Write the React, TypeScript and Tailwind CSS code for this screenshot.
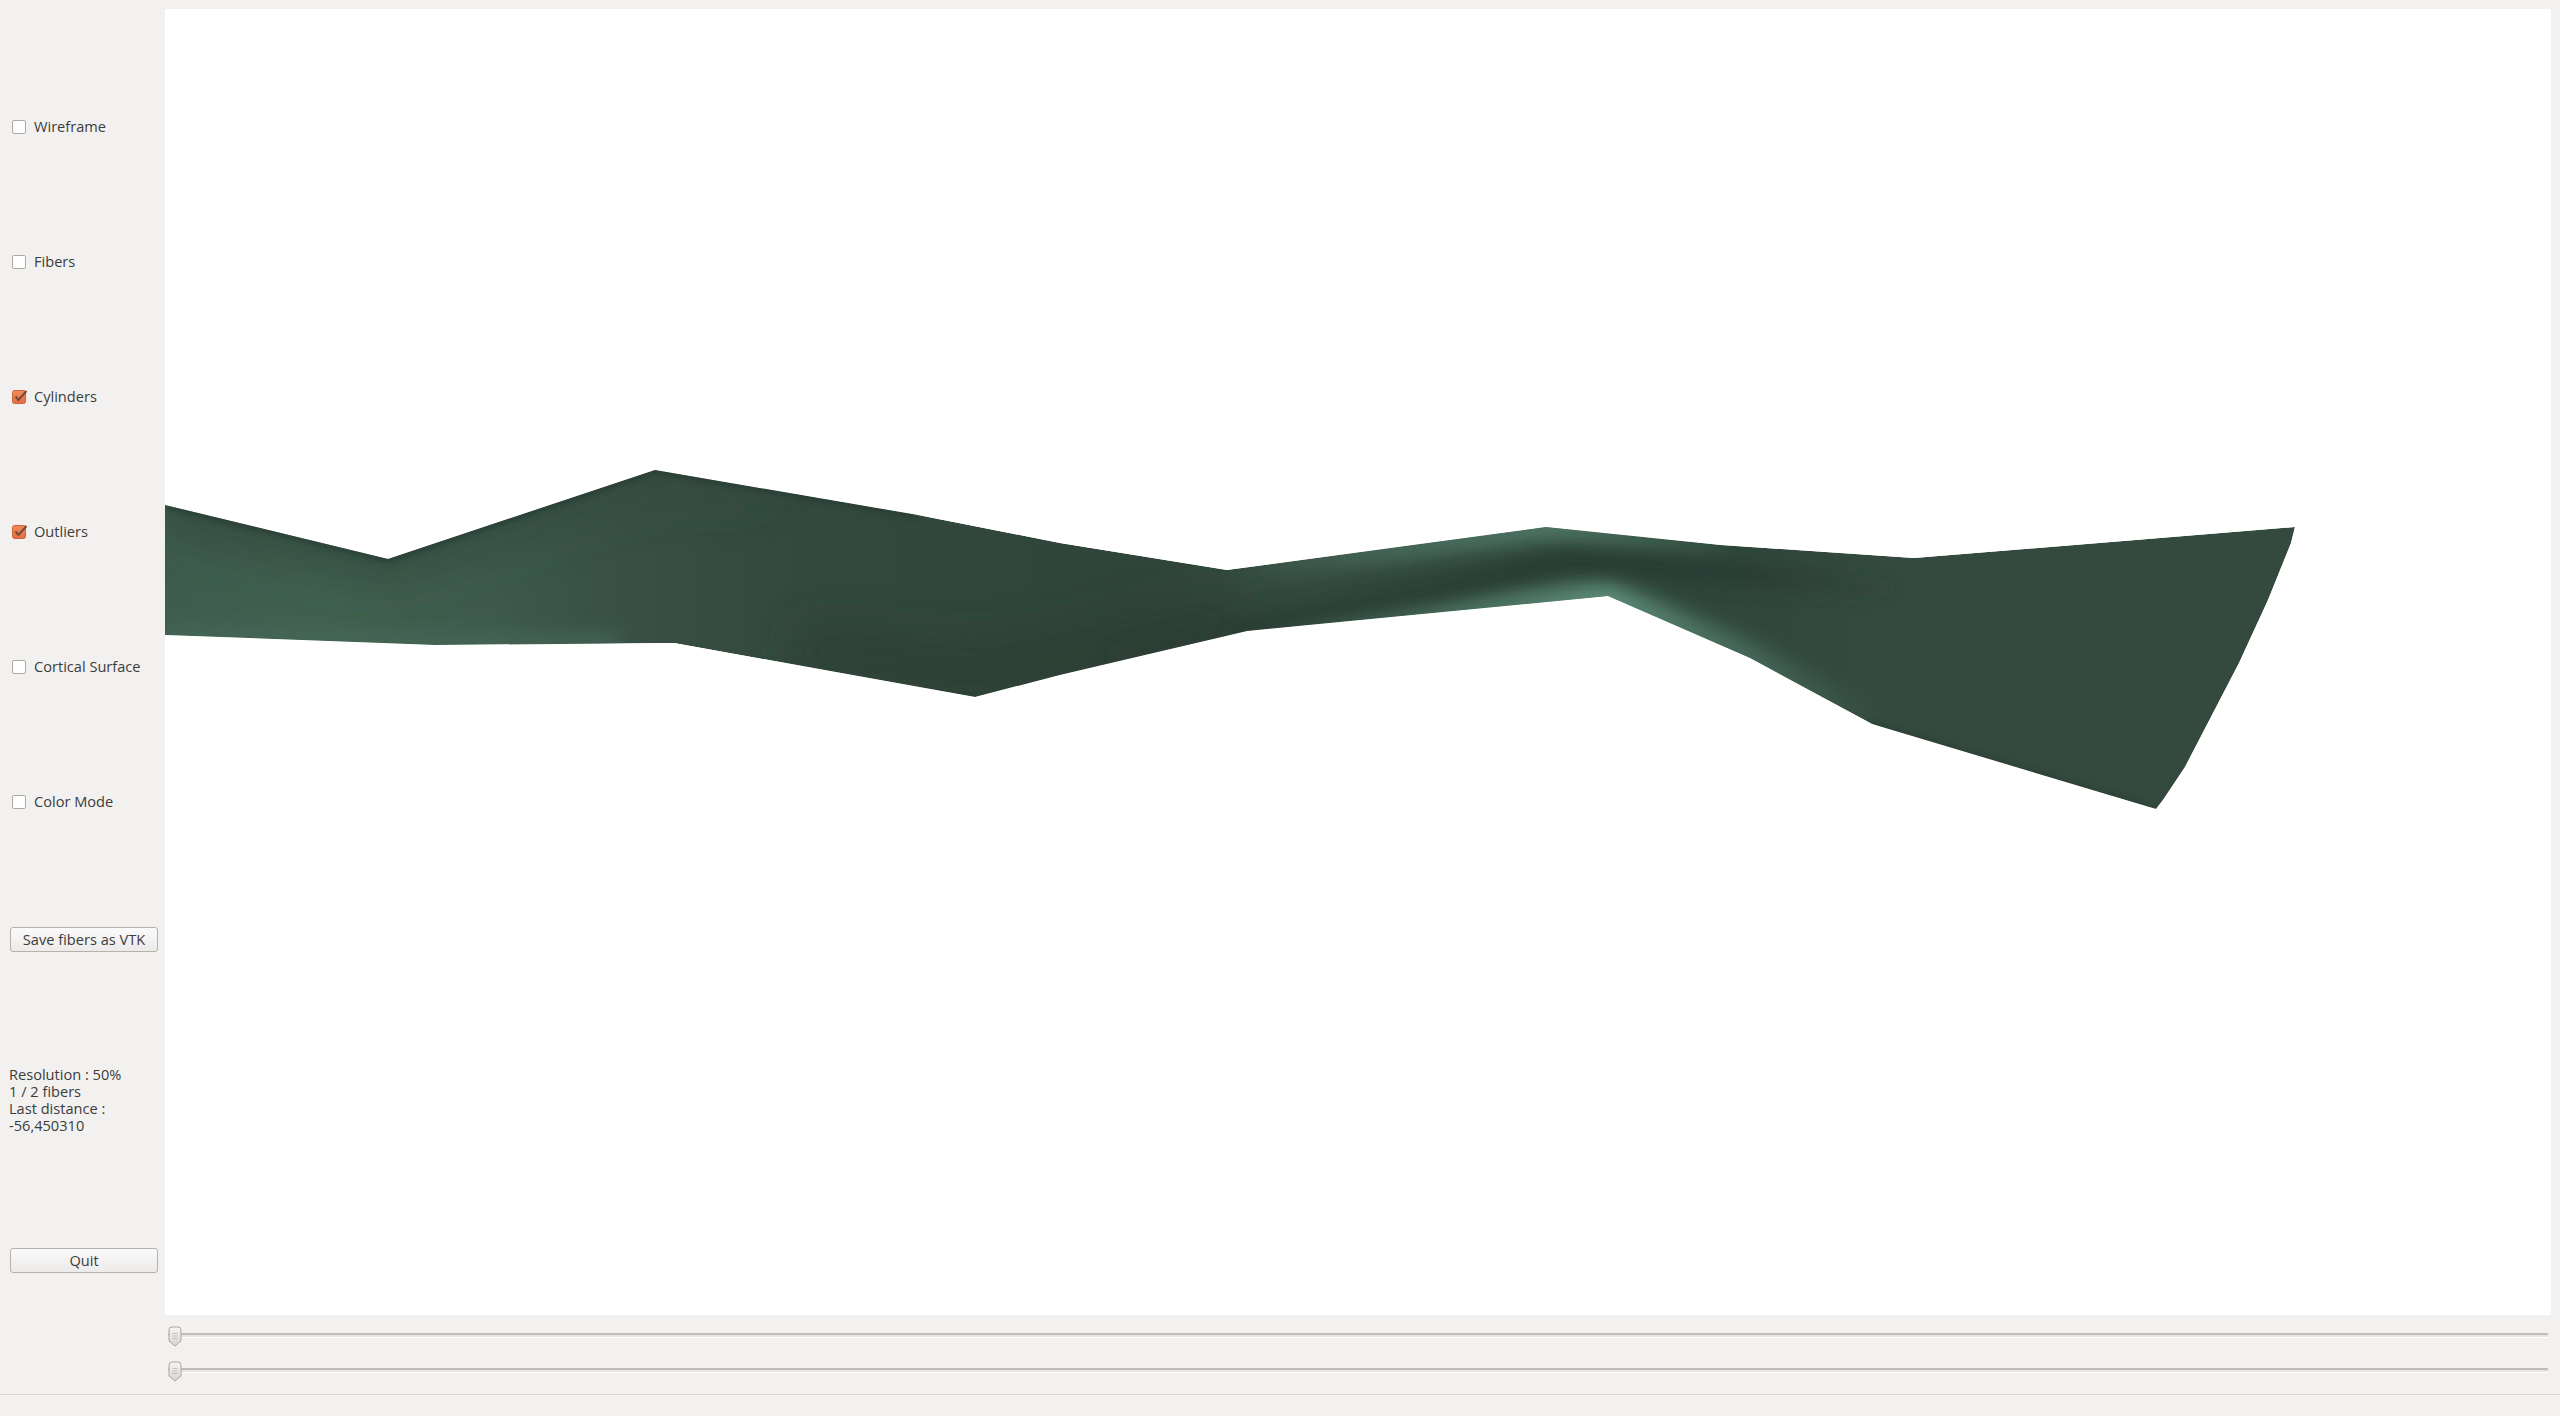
const TOP_EDGE = "165,505 388,559 655,470 918,515 1060,543 1227,570 1546,527 1721,545 1914,558 2295,527";
const RIGHT_EDGE = "2291,543 2268,600 2239,663 2185,767 2163,800 2156,809";
const BOTTOM_EDGE = "1872,724 1750,658 1608,596 1247,631 1060,675 975,697 674,643 435,645 165,635";
const OUTLINE = `${TOP_EDGE} ${RIGHT_EDGE} ${BOTTOM_EDGE}`;

function CheckRow({ label, checked }: { label: string; checked?: boolean }) {
  return (
    <div className="flex h-[135px] items-center pl-3">
      {checked ? (
        <svg width="17" height="16" viewBox="0 0 17 16" className="mr-[5px] shrink-0">
          <defs>
            <linearGradient id="checkFill" x1="0" y1="0" x2="0" y2="1">
              <stop offset="0" stopColor="#f28a58" />
              <stop offset="1" stopColor="#e66e40" />
            </linearGradient>
          </defs>
          <rect x="0.5" y="1.5" width="13" height="13" rx="2" fill="url(#checkFill)" stroke="#c9653e" />
          <path d="M3.5 7.5 L6.5 11 L14.5 2" fill="none" stroke="#704a3a" strokeWidth="2" />
        </svg>
      ) : (
        <span className="mr-2 h-3.5 w-3.5 shrink-0 rounded-[2px] border border-[#aeaaa4] bg-white" />
      )}
      <span className="text-[14.6px] text-[#3c3c3c]">{label}</span>
    </div>
  );
}

function PushButton({ label }: { label: string }) {
  return (
    <button
      type="button"
      className="mx-2.5 flex h-[25px] w-[148px] items-center justify-center rounded-[3px] border border-[#b5b1ab] bg-gradient-to-b from-[#fbfafa] to-[#ecebe9] text-[14.6px] text-[#3c3c3c]"
    >
      {label}
    </button>
  );
}

function SliderBar() {
  return (
    <div className="relative h-5 w-[2380px]">
      <div className="absolute left-0 right-0 top-[7px] h-[4px] rounded-[1px] border-t-2 border-[#c0bdb8] bg-[#e8e6e3] shadow-[0_1px_0_#ffffff]" />
      <svg width="14" height="21" viewBox="0 0 14 21" className="absolute left-0 top-0">
        <defs>
          <linearGradient id="handleFill" x1="0" y1="0" x2="0" y2="1">
            <stop offset="0" stopColor="#f7f6f5" />
            <stop offset="1" stopColor="#d6d3cf" />
          </linearGradient>
        </defs>
        <path
          d="M1 4 Q1 1 4 1 L10 1 Q13 1 13 4 L13 15 L7 20 L1 15 Z"
          fill="url(#handleFill)"
          stroke="#aaa6a0"
        />
        <path d="M4.5 7.5 H9.5 M4.5 10 H9.5 M4.5 12.5 H9.5" stroke="#c4c0bb" />
      </svg>
    </div>
  );
}

function FiberTube() {
  return (
    <svg viewBox="165 9 2386 1306" width="2386" height="1306" className="block">
      <defs>
        <clipPath id="tubeClip">
          <polygon points={OUTLINE} />
        </clipPath>
        <filter id="blurWide" filterUnits="userSpaceOnUse" x="-200" y="200" width="3000" height="900">
          <feGaussianBlur stdDeviation="26" />
        </filter>
        <filter id="blurMid" filterUnits="userSpaceOnUse" x="-200" y="200" width="3000" height="900">
          <feGaussianBlur stdDeviation="10" />
        </filter>
        <filter id="blurThin" filterUnits="userSpaceOnUse" x="-200" y="200" width="3000" height="900">
          <feGaussianBlur stdDeviation="3" />
        </filter>
        <linearGradient id="bodyShade" gradientUnits="userSpaceOnUse" x1="165" y1="0" x2="2295" y2="0">
          <stop offset="0" stopColor="#3e5c4e" />
          <stop offset="0.08" stopColor="#42614f" />
          <stop offset="0.15" stopColor="#3e5b4d" />
          <stop offset="0.22" stopColor="#384f44" />
          <stop offset="0.3" stopColor="#33493e" />
          <stop offset="0.45" stopColor="#304539" />
          <stop offset="0.52" stopColor="#344a3f" />
          <stop offset="0.72" stopColor="#2f453a" />
          <stop offset="0.8" stopColor="#344a3f" />
          <stop offset="1" stopColor="#344a3f" />
        </linearGradient>
        <linearGradient id="topGlow" gradientUnits="userSpaceOnUse" x1="1220" y1="0" x2="1760" y2="0">
          <stop offset="0" stopColor="#4f7766" stopOpacity="0" />
          <stop offset="0.3" stopColor="#4f7766" stopOpacity="0.7" />
          <stop offset="0.62" stopColor="#527b6a" />
          <stop offset="1" stopColor="#4f7766" stopOpacity="0" />
        </linearGradient>
        <linearGradient id="lowGlow" gradientUnits="userSpaceOnUse" x1="1240" y1="0" x2="1880" y2="0">
          <stop offset="0" stopColor="#5b8a76" stopOpacity="0" />
          <stop offset="0.25" stopColor="#5b8a76" stopOpacity="0.45" />
          <stop offset="0.57" stopColor="#5f907b" />
          <stop offset="0.8" stopColor="#4f7766" stopOpacity="0.7" />
          <stop offset="1" stopColor="#4f7766" stopOpacity="0" />
        </linearGradient>
        <linearGradient id="darkCore" gradientUnits="userSpaceOnUse" x1="1100" y1="0" x2="1900" y2="0">
          <stop offset="0" stopColor="#283a30" stopOpacity="0" />
          <stop offset="0.2" stopColor="#283a30" />
          <stop offset="0.8" stopColor="#283a30" />
          <stop offset="1" stopColor="#283a30" stopOpacity="0" />
        </linearGradient>
        <linearGradient id="topShade" gradientUnits="userSpaceOnUse" x1="165" y1="0" x2="800" y2="0">
          <stop offset="0" stopColor="#2f463b" />
          <stop offset="0.7" stopColor="#2f463b" stopOpacity="0.7" />
          <stop offset="1" stopColor="#2f463b" stopOpacity="0" />
        </linearGradient>
      </defs>
      <g clipPath="url(#tubeClip)">
        <polygon points={OUTLINE} fill="url(#bodyShade)" />
        {/* darker towards the top on the left, lit along the lower edge */}
        <polyline points="165,505 388,559 655,470 800,495" fill="none" stroke="url(#topShade)" strokeWidth="40" filter="url(#blurWide)" />
        <polyline points="165,635 435,645 620,643" fill="none" stroke="#46695a" strokeWidth="14" filter="url(#blurMid)" />
        {/* dark belly */}
        <polyline points="800,650 980,675 1100,650 1240,615" fill="none" stroke="#293b31" strokeWidth="36" filter="url(#blurWide)" />
        {/* twisted part */}
        <polyline points="1227,570 1546,527 1721,545" fill="none" stroke="url(#topGlow)" strokeWidth="26" filter="url(#blurMid)" />
        <polyline points="1247,631 1608,596 1750,658 1872,724" fill="none" stroke="url(#lowGlow)" strokeWidth="30" filter="url(#blurMid)" />
        <polyline points="1100,660 1300,615 1440,590 1570,560 1720,572 1900,590" fill="none" stroke="url(#darkCore)" strokeWidth="20" filter="url(#blurMid)" />
        {/* dark rim along the top and the end */}
        <polyline points="165,505 388,559 655,470 918,515" fill="none" stroke="#263a30" strokeWidth="6" filter="url(#blurThin)" />
        <polyline points="2156,809 1872,724" fill="none" stroke="#2b4034" strokeWidth="5" filter="url(#blurThin)" />
      </g>
    </svg>
  );
}

export default function App() {
  return (
    <div className="flex h-screen flex-col bg-[#f2f1f0] font-['Open_Sans','Noto_Sans',sans-serif]">
      <div className="flex h-[1394px] shrink-0">
        {/* Left controls */}
        <div className="flex w-[165px] shrink-0 flex-col pt-[59px]">
          <CheckRow label="Wireframe" />
          <CheckRow label="Fibers" />
          <CheckRow label="Cylinders" checked />
          <CheckRow label="Outliers" checked />
          <CheckRow label="Cortical Surface" />
          <CheckRow label="Color Mode" />
          <div className="mt-[58px]">
            <PushButton label="Save fibers as VTK" />
          </div>
          <div className="mt-[114px] pl-[9px] text-[14.6px] leading-[17px] text-[#3c3c3c]">
            <div>Resolution : 50%</div>
            <div>1 / 2 fibers</div>
            <div>Last distance :</div>
            <div>-56,450310</div>
          </div>
          <div className="mt-[114px]">
            <PushButton label="Quit" />
          </div>
        </div>

        {/* Render view and sliders */}
        <div className="flex min-w-0 flex-1 flex-col pr-[9px] pt-[9px]">
          <div className="h-[1306px] w-[2386px] bg-white">
            <FiberTube />
          </div>
          <div className="mt-[11px] flex flex-col gap-[15px] pl-[3px]">
            <SliderBar />
            <SliderBar />
          </div>
        </div>
      </div>

      {/* Status bar */}
      <div className="flex-1 border-t border-[#d9d7d4]" />
    </div>
  );
}
